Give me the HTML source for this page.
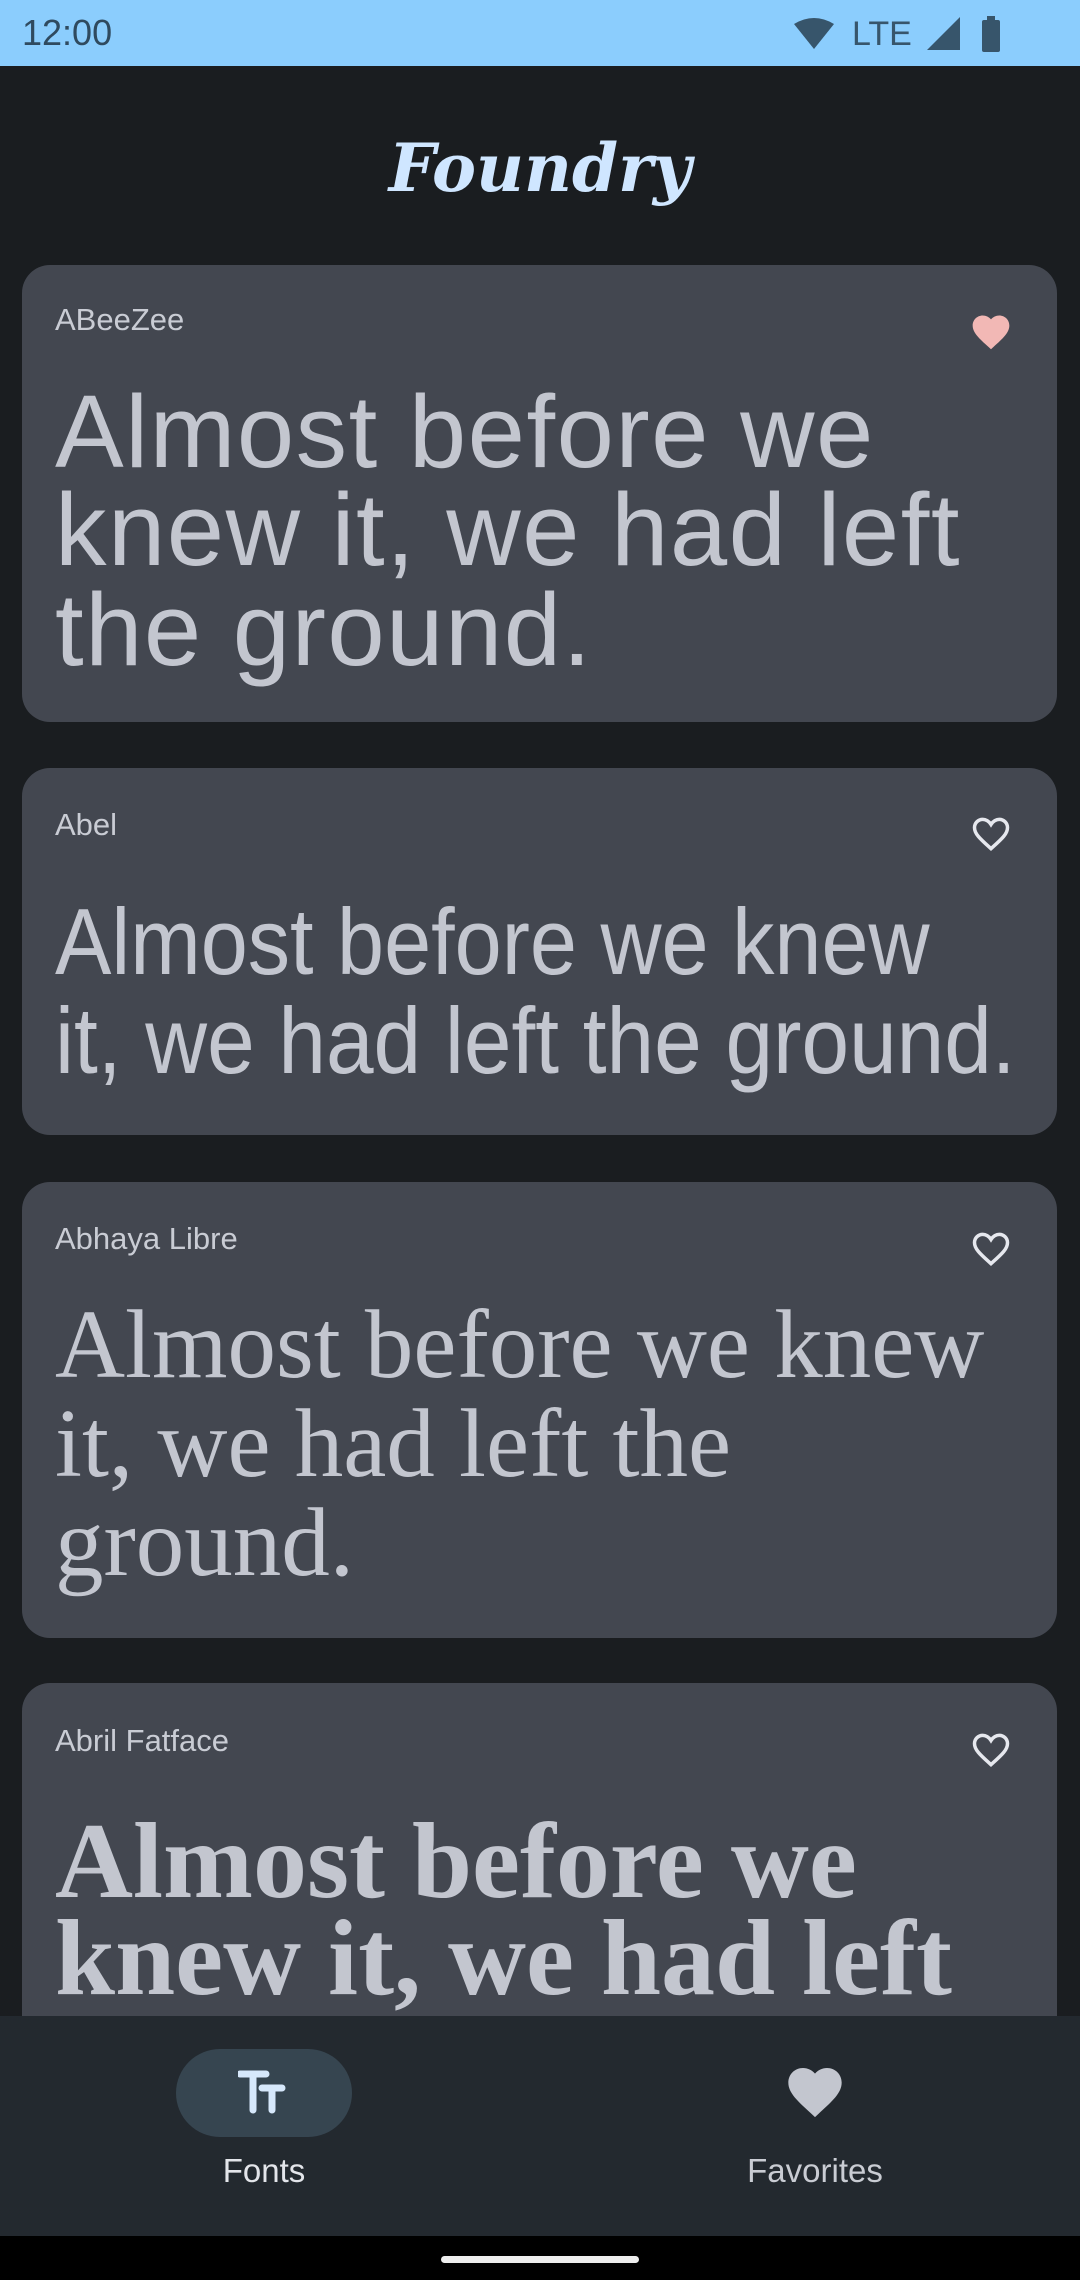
<!DOCTYPE html>
<html><head><meta charset="utf-8">
<style>
*{margin:0;padding:0;box-sizing:border-box}
body{width:1080px;height:2280px;background:#1a1d20;position:relative;overflow:hidden;font-family:"Liberation Sans",sans-serif;color:#c3c6cf}
.abs{position:absolute;white-space:nowrap}
.status{position:absolute;left:0;top:0;width:1080px;height:66px;background:#8bcdfd}
.card{position:absolute;left:22px;width:1035px;background:#434750;border-radius:28px;overflow:hidden}
.lbl{position:absolute;left:55px;font-size:31px;line-height:30px;color:#c9ccd4}
.l{position:absolute;left:55px;white-space:nowrap;line-height:1;color:#c3c6cf}
.nav{position:absolute;left:0;top:2016px;width:1080px;height:220px;background:#23292f}
</style></head><body>
<div class="status"></div>
<div class="abs" style="left:22px;top:13px;font-size:36px;line-height:40px;color:#2f4a5f">12:00</div>
<svg class="abs" style="left:790px;top:12px" width="230" height="44" viewBox="0 0 230 44">
<path d="M4 12 Q24 0 44 12 L24 37 Z" fill="#37556b"/>
<text x="62" y="33" font-family="Liberation Sans" font-size="34" fill="#37556b">LTE</text>
<path d="M137 38 L170 5 L170 38 Z" fill="#37556b"/>
<rect x="192" y="8" width="18" height="32" rx="2" fill="#37556b"/><rect x="197" y="4" width="8" height="5" fill="#37556b"/>
</svg>
<div class="abs" style="left:0;width:1080px;top:128px;text-align:center;font-family:'DejaVu Serif',serif;font-style:italic;font-weight:bold;font-size:66px;line-height:80px;color:#cfe6ff">Foundry</div>

<div class="card" style="top:265px;height:457px"></div>
<div class="lbl" style="top:305px">ABeeZee</div>
<svg class="abs" style="left:968px;top:310px" width="46" height="44" viewBox="0 0 24 24"><path d="M12 21.4 10.6 20.1C5.4 15.4 2 12.3 2 8.5 2 5.4 4.4 3 7.5 3 9.2 3 10.9 3.8 12 5.1 13.1 3.8 14.8 3 16.5 3 19.6 3 22 5.4 22 8.5 22 12.3 18.6 15.4 13.4 20.1Z" fill="#f2b8b5"/></svg>
<div class="l" style="top:380px;font-size:103px;letter-spacing:1.5px">Almost before we</div>
<div class="l" style="top:478px;font-size:103px;letter-spacing:1.5px">knew it, we had left</div>
<div class="l" style="top:578px;font-size:103px;letter-spacing:1.5px">the ground.</div>

<div class="card" style="top:768px;height:367px"></div>
<div class="lbl" style="top:810px">Abel</div>
<svg class="abs" style="left:968px;top:812px" width="46" height="44" viewBox="0 0 24 24"><path d="M12 20 10.9 19C5.9 14.5 3 11.8 3 8.5 3 6 5 4 7.5 4 9 4 10.9 5 12 6.8 13.1 5 15 4 16.5 4 19 4 21 6 21 8.5 21 11.8 18.1 14.5 13.1 19Z" fill="none" stroke="#e6e8ee" stroke-width="1.9"/></svg>
<div class="l" style="top:895px;font-size:94px;transform:scaleX(.9);transform-origin:left">Almost before we knew</div>
<div class="l" style="top:994px;font-size:94px;transform:scaleX(.91);transform-origin:left">it, we had left the ground.</div>

<div class="card" style="top:1182px;height:456px"></div>
<div class="lbl" style="top:1224px">Abhaya Libre</div>
<svg class="abs" style="left:968px;top:1227px" width="46" height="44" viewBox="0 0 24 24"><path d="M12 20 10.9 19C5.9 14.5 3 11.8 3 8.5 3 6 5 4 7.5 4 9 4 10.9 5 12 6.8 13.1 5 15 4 16.5 4 19 4 21 6 21 8.5 21 11.8 18.1 14.5 13.1 19Z" fill="none" stroke="#e6e8ee" stroke-width="1.9"/></svg>
<div class="l" style="top:1296px;font-size:97px;font-family:'Liberation Serif',serif">Almost before we knew</div>
<div class="l" style="top:1395px;font-size:97px;font-family:'Liberation Serif',serif">it, we had left the</div>
<div class="l" style="top:1494px;font-size:97px;font-family:'Liberation Serif',serif">ground.</div>

<div class="card" style="top:1683px;height:400px"></div>
<div class="lbl" style="top:1726px">Abril Fatface</div>
<svg class="abs" style="left:968px;top:1728px" width="46" height="44" viewBox="0 0 24 24"><path d="M12 20 10.9 19C5.9 14.5 3 11.8 3 8.5 3 6 5 4 7.5 4 9 4 10.9 5 12 6.8 13.1 5 15 4 16.5 4 19 4 21 6 21 8.5 21 11.8 18.1 14.5 13.1 19Z" fill="none" stroke="#e6e8ee" stroke-width="1.9"/></svg>
<div class="l" style="top:1808px;font-size:108px;font-weight:bold;letter-spacing:0px;font-family:'Liberation Serif',serif">Almost before we</div>
<div class="l" style="top:1905px;font-size:108px;font-weight:bold;letter-spacing:0px;font-family:'Liberation Serif',serif">knew it, we had left</div>

<div class="nav"></div>
<div class="abs" style="left:176px;top:2049px;width:176px;height:88px;border-radius:44px;background:#364550"></div>
<svg class="abs" style="left:238px;top:2070px" width="54" height="46" viewBox="0 0 54 46">
<path d="M2 4 H28 M15 4 V40 M24 18 H44 M34 18 V40" stroke="#d6e8fb" stroke-width="7" stroke-linecap="round" fill="none"/>
</svg>
<svg class="abs" style="left:780px;top:2060px" width="70" height="64" viewBox="0 0 24 24"><path d="M12 21.4 10.6 20.1C5.4 15.4 2 12.3 2 8.5 2 5.4 4.4 3 7.5 3 9.2 3 10.9 3.8 12 5.1 13.1 3.8 14.8 3 16.5 3 19.6 3 22 5.4 22 8.5 22 12.3 18.6 15.4 13.4 20.1Z" fill="#c3c6cf"/></svg>
<div class="abs" style="left:164px;width:200px;text-align:center;top:2152px;font-size:33px;line-height:38px;color:#e3e5ea">Fonts</div>
<div class="abs" style="left:665px;width:300px;text-align:center;top:2152px;font-size:33px;line-height:38px;color:#c9ccd3">Favorites</div>
<div class="abs" style="left:0;top:2236px;width:1080px;height:44px;background:#000"></div>
<div class="abs" style="left:441px;top:2256px;width:198px;height:7px;border-radius:4px;background:#eee"></div>
</body></html>
